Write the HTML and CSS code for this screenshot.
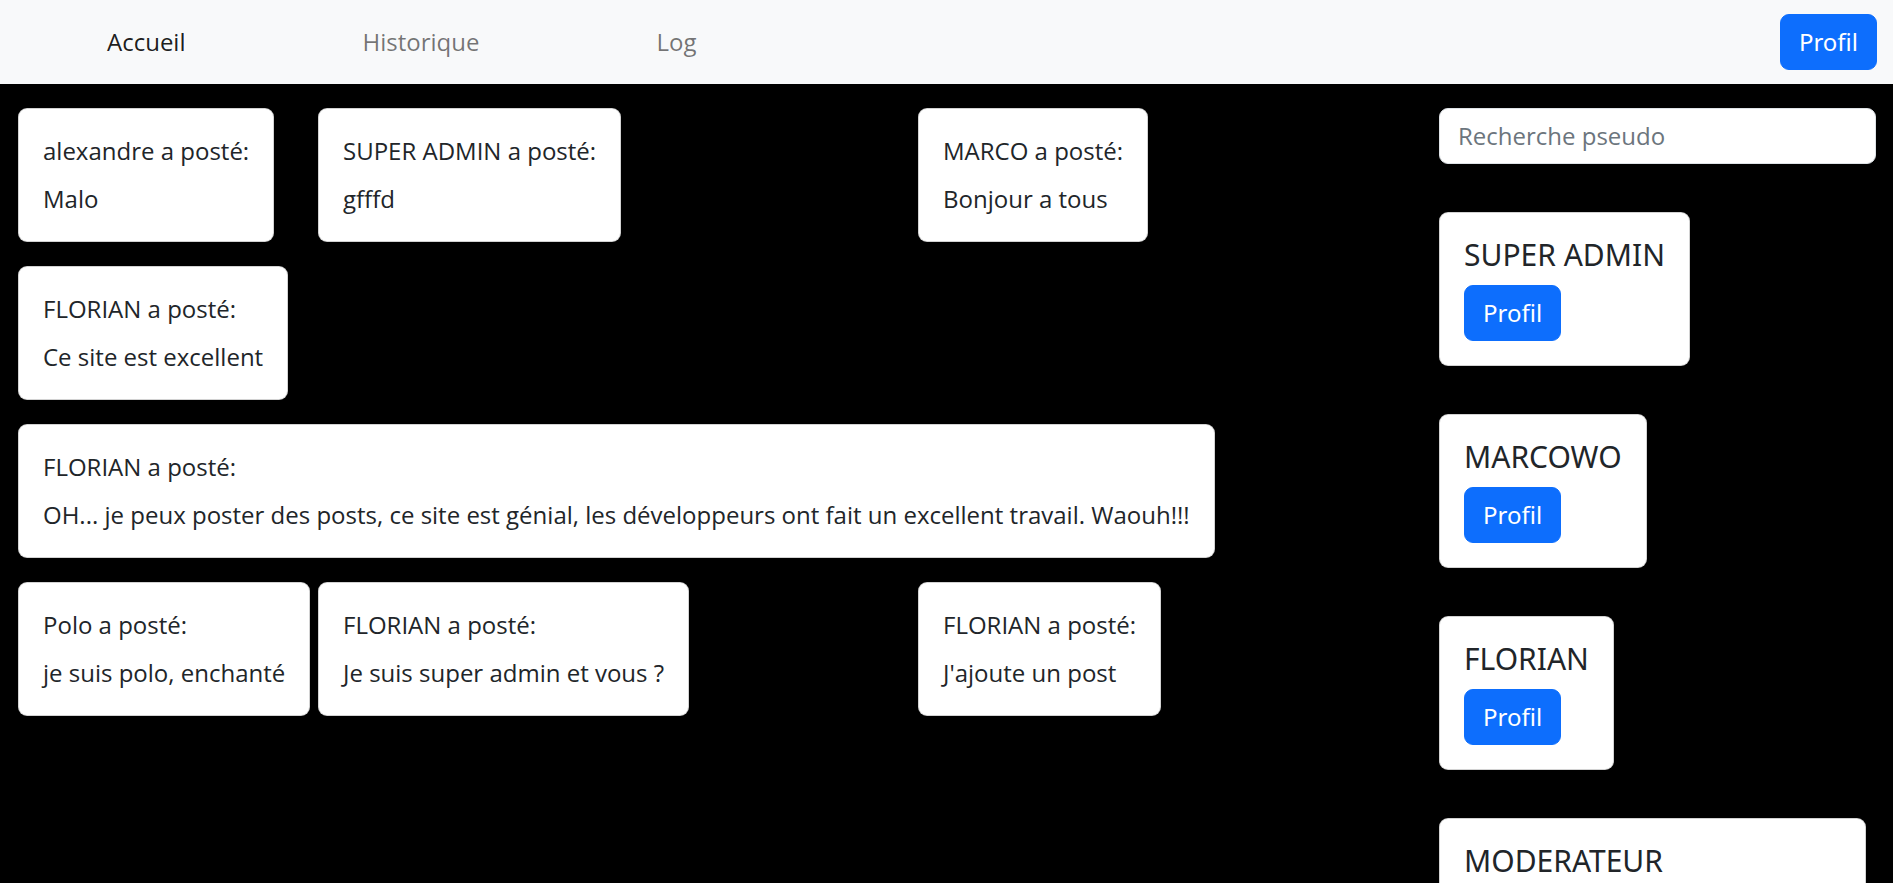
FILE: index.html
```html
<!DOCTYPE html>
<html lang="fr">
<head>
<meta charset="utf-8">
<title>Accueil</title>
<link rel="stylesheet" href="styles.css">
</head>
<body>
<nav class="navbar">
  <ul class="nav-links">
    <li><a class="nav-link active" href="#">Accueil</a></li>
    <li><a class="nav-link" href="#">Historique</a></li>
    <li><a class="nav-link" href="#">Log</a></li>
  </ul>
  <button class="btn" type="button">Profil</button>
</nav>
<div class="page">
  <main class="posts">
    <article class="post-card">
      <p class="post-author">alexandre a posté:</p>
      <p class="post-text">Malo</p>
    </article>
    <article class="post-card span-2">
      <p class="post-author">SUPER ADMIN a posté:</p>
      <p class="post-text">gfffd</p>
    </article>
    <article class="post-card">
      <p class="post-author">MARCO a posté:</p>
      <p class="post-text">Bonjour a tous</p>
    </article>
    <article class="post-card">
      <p class="post-author">FLORIAN a posté:</p>
      <p class="post-text">Ce site est excellent</p>
    </article>
    <article class="post-card span-4">
      <p class="post-author">FLORIAN a posté:</p>
      <p class="post-text">OH... je peux poster des posts, ce site est génial, les développeurs ont fait un excellent travail. Waouh!!!</p>
    </article>
    <article class="post-card">
      <p class="post-author">Polo a posté:</p>
      <p class="post-text">je suis polo, enchanté</p>
    </article>
    <article class="post-card span-2">
      <p class="post-author">FLORIAN a posté:</p>
      <p class="post-text">Je suis super admin et vous ?</p>
    </article>
    <article class="post-card">
      <p class="post-author">FLORIAN a posté:</p>
      <p class="post-text">J'ajoute un post</p>
    </article>
  </main>
  <aside class="sidebar">
    <input class="search" type="text" placeholder="Recherche pseudo">
    <div class="user-card">
      <h5 class="user-name">SUPER ADMIN</h5>
      <button class="btn" type="button">Profil</button>
    </div>
    <div class="user-card">
      <h5 class="user-name">MARCOWO</h5>
      <button class="btn" type="button">Profil</button>
    </div>
    <div class="user-card">
      <h5 class="user-name">FLORIAN</h5>
      <button class="btn" type="button">Profil</button>
    </div>
    <div class="user-card user-card-wide">
      <h5 class="user-name">MODERATEUR</h5>
      <button class="btn" type="button">Profil</button>
    </div>
  </aside>
</div>
</body>
</html>
```
FILE: styles.css
```css
html {
  overflow: hidden;
}

body {
  margin: 0;
  background: #000;
  font-family: "Open Sans", "Noto Sans", sans-serif;
  font-size: 24px;
  line-height: 36px;
  color: #212529;
}

.navbar {
  display: flex;
  align-items: center;
  justify-content: space-between;
  height: 84px;
  padding: 0 16px 0 18px;
  background: #f8f9fa;
  box-sizing: border-box;
}

.nav-links {
  display: flex;
  gap: 153px;
  list-style: none;
  margin: 0;
  padding: 0 0 0 77px;
}

.nav-link {
  display: block;
  padding: 12px;
  color: rgba(0, 0, 0, 0.55);
  text-decoration: none;
}

.nav-link.active {
  color: rgba(0, 0, 0, 0.9);
}

.btn {
  font-family: "Noto Sans", "Open Sans", sans-serif;
  font-size: 24px;
  line-height: 36px;
  padding: 9px 18px;
  color: #fff;
  background: #0d6efd;
  border: 1px solid #0d6efd;
  border-radius: 9px;
  cursor: pointer;
}

.page {
  display: flex;
  gap: 37px;
  padding: 24px 17px 0 18px;
}

.posts {
  flex: 0 0 1384px;
  display: grid;
  grid-template-columns: repeat(4, 300px);
  row-gap: 24px;
  align-content: start;
}

.post-card {
  justify-self: start;
  background: #fff;
  border: 1px solid rgba(0, 0, 0, 0.175);
  border-radius: 9px;
  padding: 24px;
  white-space: nowrap;
}

.span-2 {
  grid-column: span 2;
}

.span-4 {
  grid-column: span 4;
}

.post-author {
  margin: 0 0 12px;
}

.post-text {
  margin: 0;
}

.sidebar {
  flex: 1;
  display: flex;
  flex-direction: column;
  align-items: flex-start;
  gap: 48px;
}

.search {
  width: 100%;
  box-sizing: border-box;
  font-family: "Open Sans", sans-serif;
  font-size: 24px;
  line-height: 36px;
  padding: 9px 18px;
  color: #212529;
  background: #fff;
  border: 1.5px solid #dee2e6;
  border-radius: 9px;
  outline: none;
}

.search::placeholder {
  color: #6c757d;
}

.user-card {
  display: flex;
  flex-direction: column;
  align-items: flex-start;
  background: #fff;
  border: 1px solid rgba(0, 0, 0, 0.175);
  border-radius: 9px;
  padding: 24px;
}

.user-card-wide {
  width: 427px;
  box-sizing: border-box;
}

.user-name {
  font-family: "Noto Sans", "Open Sans", sans-serif;
  font-size: 30px;
  font-weight: 400;
  line-height: 36px;
  margin: 0 0 12px;
  color: #212529;
}
```
